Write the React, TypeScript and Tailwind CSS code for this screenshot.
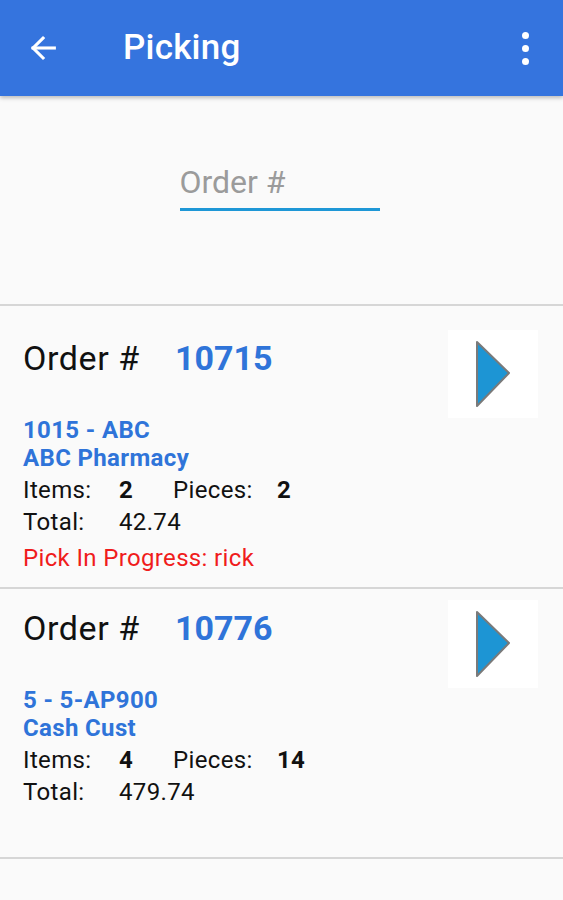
import React from 'react';

type Order = {
  no: string;
  code: string;
  name: string;
  items: string;
  pieces: string;
  total: string;
  status?: string;
};

const orders: Order[] = [
  { no: '10715', code: '1015 - ABC', name: 'ABC Pharmacy', items: '2', pieces: '2', total: '42.74', status: 'Pick In Progress: rick' },
  { no: '10776', code: '5 - 5-AP900', name: 'Cash Cust', items: '4', pieces: '14', total: '479.74' },
];

const PlayButton: React.FC = () => (
  <button className="w-[90px] h-[88px] bg-white flex items-center justify-center shrink-0">
    <svg width="40" height="70" viewBox="0 0 40 70">
      <path d="M4 3 L36 34 L4 67 Z" fill="#1d95d4" stroke="#7a7a7a" strokeWidth="2" strokeLinejoin="round" />
    </svg>
  </button>
);

const OrderCard: React.FC<{ order: Order; top: string; bottom: string }> = ({ order, top, bottom }) => (
  <div className={`flex items-start justify-between pl-[23px] pr-[25px] ${top} ${bottom} border-b-2 border-[#d6d6d6]`}>
    <div className="flex flex-col">
      <div className="flex items-center pt-[8px] h-[48px] text-[34px] leading-[40px]">
        <span className="text-[#111] w-[152px] tracking-[0.6px]">Order #</span>
        <span className="text-[#2f74d9] font-bold">{order.no}</span>
      </div>
      <div className="mt-[38px] text-[24px] leading-[28px] font-bold tracking-[0.35px] text-[#2f74d9]">
        <div>{order.code}</div>
        <div>{order.name}</div>
      </div>
      <div className="mt-[2px] text-[24px] leading-[32px] tracking-[0.35px] text-[#111]">
        <div className="flex">
          <span className="w-[96px]">Items:</span>
          <span className="w-[54px] font-bold">{order.items}</span>
          <span className="w-[104px]">Pieces:</span>
          <span className="font-bold">{order.pieces}</span>
        </div>
        <div className="flex">
          <span className="w-[96px]">Total:</span>
          <span>{order.total}</span>
        </div>
        {order.status && <div className="mt-[4px] text-[#f01c1c]">{order.status}</div>}
      </div>
    </div>
    <PlayButton />
  </div>
);

export default function App() {
  return (
    <div className="w-[563px] h-[900px] bg-[#fafafa] overflow-hidden" style={{ fontFamily: 'Roboto, "Noto Sans", sans-serif' }}>
      <header className="h-[96px] bg-[#3574de] flex items-center pl-[26px] pr-[34px] text-white shadow-[0_2px_4px_rgba(0,0,0,0.25)] relative z-10">
        <svg width="34" height="34" viewBox="0 0 24 24" fill="none" stroke="white" strokeWidth="2.2" strokeLinecap="square">
          <path d="M20 12H5" />
          <path d="M12 5l-7 7 7 7" />
        </svg>
        <h1 className="ml-[63px] text-[35px] font-medium tracking-[0.2px] flex-1 leading-none -mt-[2px]">Picking</h1>
        <div className="flex flex-col gap-[6px] items-center">
          <span className="w-[7px] h-[7px] rounded-full bg-white" />
          <span className="w-[7px] h-[7px] rounded-full bg-white" />
          <span className="w-[7px] h-[7px] rounded-full bg-white" />
        </div>
      </header>

      <div className="h-[210px] flex justify-center items-start pt-[67px] border-b-2 border-[#d6d6d6]">
        <div className="w-[200px] ml-[-4px] border-b-[3px] border-[#1e97d6]">
          <input
            placeholder="Order #"
            className="w-full bg-transparent outline-none text-[32px] leading-[38px] pb-[7px] placeholder:text-[#9b9b9b]"
          />
        </div>
      </div>

      <OrderCard order={orders[0]} top="pt-[24px]" bottom="pb-[13px]" />
      <OrderCard order={orders[1]} top="pt-[11px]" bottom="pb-[49px]" />
    </div>
  );
}
